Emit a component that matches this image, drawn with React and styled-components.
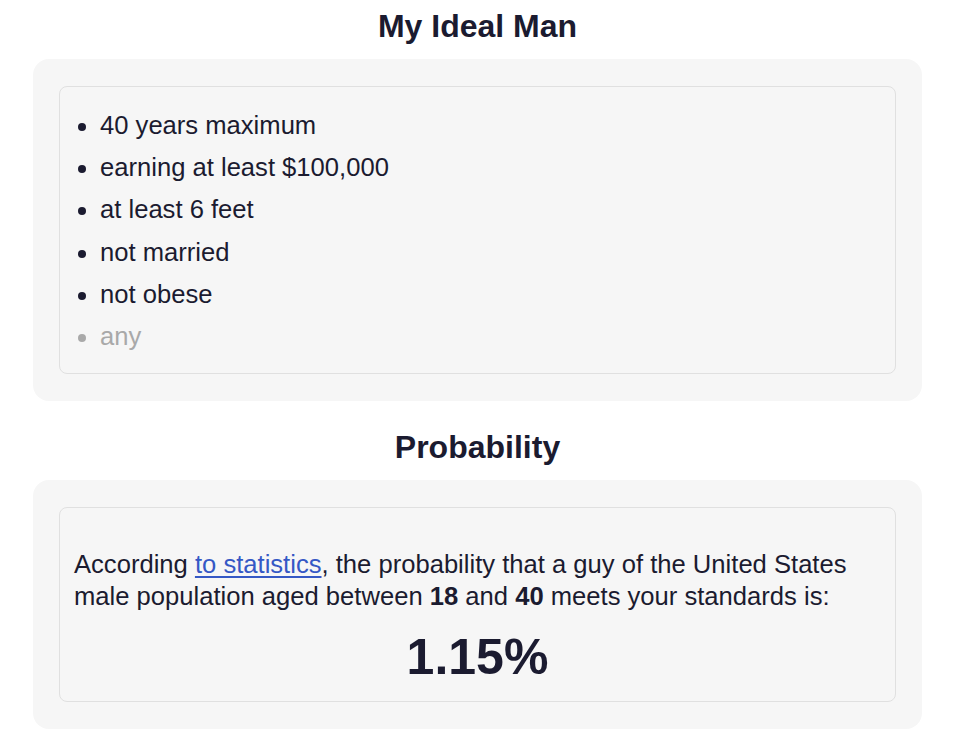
import React from "react";
import styled, { createGlobalStyle } from "styled-components";

const GlobalStyle = createGlobalStyle`
  body {
    margin: 0;
    background: #ffffff;
    font-family: "Liberation Sans", Arial, Helvetica, sans-serif;
    color: #1b1b30;
  }
`;

const criteria = [
  { label: "40 years maximum" },
  { label: "earning at least $100,000" },
  { label: "at least 6 feet" },
  { label: "not married" },
  { label: "not obese" },
  { label: "any", muted: true },
];

export default function App() {
  return (
    <>
      <GlobalStyle />
      <Page>
        <Title>My Ideal Man</Title>
        <Card>
          <Inner>
            <List>
              {criteria.map((item) => (
                <Item key={item.label} $muted={item.muted}>
                  {item.label}
                </Item>
              ))}
            </List>
          </Inner>
        </Card>

        <Title $spaced>Probability</Title>
        <Card>
          <Inner $result>
            <Text>
              According <Link href="#">to statistics</Link>, the probability
              that a guy of the United States male population aged between{" "}
              <b>18</b> and <b>40</b> meets your standards is:
            </Text>
            <Percent>1.15%</Percent>
          </Inner>
        </Card>
      </Page>
    </>
  );
}

const Page = styled.div`
  width: 889px;
  margin-left: 33px;
  padding-top: 6px;
`;

const Title = styled.h2`
  margin: ${(p) => (p.$spaced ? "26px" : "0")} 0 13px;
  font-size: 32px;
  line-height: 40px;
  font-weight: 700;
  text-align: center;
  color: #1b1b30;
`;

const Card = styled.div`
  background: #f6f6f6;
  border-radius: 16px;
  padding: 27px 26px;
`;

const Inner = styled.div`
  border: 1px solid #e0e0e0;
  border-radius: 8px;
  padding: ${(p) => (p.$result ? "40px 14px 14px" : "17px 14px 16px")};
`;

const List = styled.ul`
  margin: 0;
  padding-left: 26px;
  list-style: disc;
`;

const Item = styled.li`
  font-size: 25.6px;
  line-height: 42.2px;
  color: ${(p) => (p.$muted ? "#a9a9a9" : "#1b1b30")};
`;

const Text = styled.p`
  margin: 0;
  font-size: 25.6px;
  line-height: 32px;
`;

const Link = styled.a`
  color: #3558c5;
  text-decoration: underline;
  text-underline-offset: 3px;
`;

const Percent = styled.div`
  margin-top: 15px;
  font-size: 50px;
  line-height: 60px;
  font-weight: 700;
  text-align: center;
`;
